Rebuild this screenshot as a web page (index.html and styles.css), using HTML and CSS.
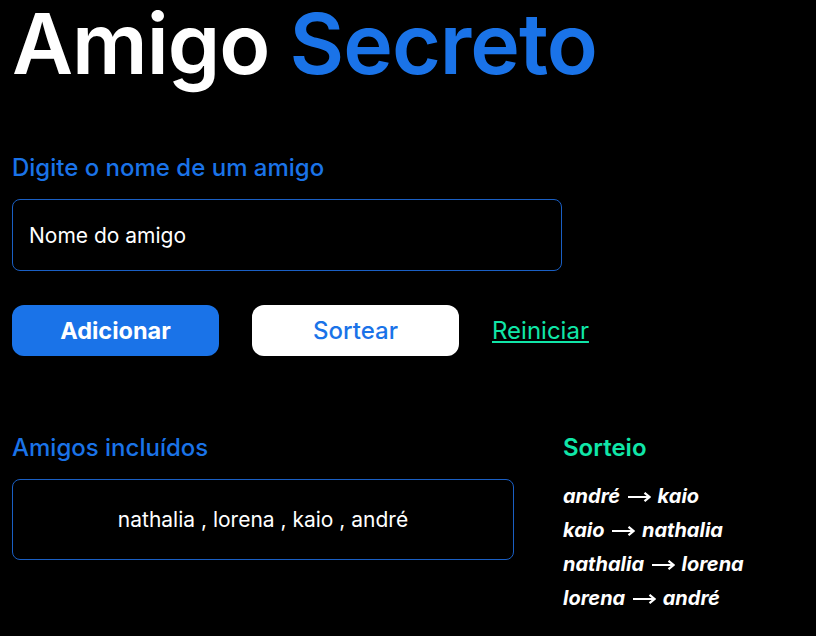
FILE: index.html
```html
<!DOCTYPE html>
<html lang="pt-BR">
<head>
    <meta charset="UTF-8">
    <meta name="viewport" content="width=device-width, initial-scale=1.0">
    <title>Amigo Secreto</title>
    <link rel="stylesheet" href="styles.css">
</head>
<body>
    <main class="app">
        <h1 class="title">Amigo <span class="title-accent">Secreto</span></h1>

        <section class="input-section">
            <label class="section-label" for="amigo">Digite o nome de um amigo</label>
            <input type="text" id="amigo" class="input-name" placeholder="Nome do amigo">
            <div class="button-row">
                <button type="button" class="button button-add">Adicionar</button>
                <button type="button" class="button button-draw">Sortear</button>
                <a href="#" class="link-reset">Reiniciar</a>
            </div>
        </section>

        <section class="results">
            <div class="friends-column">
                <h2 class="section-label">Amigos incluídos</h2>
                <div class="friends-box">nathalia , lorena , kaio , andré</div>
            </div>
            <div class="draw-column">
                <h2 class="section-label draw-title">Sorteio</h2>
                <ul class="draw-list">
                    <li>andré <svg class="arrow" viewBox="0 0 24 10"><path d="M1 5H22M17.5 0.8L22.6 5L17.5 9.2"/></svg> kaio</li>
                    <li>kaio <svg class="arrow" viewBox="0 0 24 10"><path d="M1 5H22M17.5 0.8L22.6 5L17.5 9.2"/></svg> nathalia</li>
                    <li>nathalia <svg class="arrow" viewBox="0 0 24 10"><path d="M1 5H22M17.5 0.8L22.6 5L17.5 9.2"/></svg> lorena</li>
                    <li>lorena <svg class="arrow" viewBox="0 0 24 10"><path d="M1 5H22M17.5 0.8L22.6 5L17.5 9.2"/></svg> andré</li>
                </ul>
            </div>
        </section>
    </main>
</body>
</html>
```

FILE: styles.css
```css
body {
    margin: 0;
    background-color: #000;
    color: #fff;
    font-family: 'Inter', sans-serif;
}
.app {
    padding: 0 12px;
}
.title {
    margin: 0;
    font-size: 84px;
    line-height: 88px;
    font-weight: 600;
    letter-spacing: -1px;
    color: #fff;
}
.title-accent {
    color: #1a73e8;
}
.section-label {
    display: block;
    margin: 0 0 18px;
    font-size: 24px;
    line-height: 26px;
    font-weight: 500;
    color: #1a73e8;
}
.input-section {
    margin-top: 67px;
}
.input-name {
    display: block;
    width: 550px;
    height: 72px;
    box-sizing: border-box;
    padding: 0 16px;
    background-color: #000;
    border: 1px solid #1a5fc4;
    border-radius: 8px;
    font-family: 'Inter', sans-serif;
    font-size: 21px;
    color: #fff;
}
.input-name::placeholder {
    color: #fff;
}
.button-row {
    display: flex;
    align-items: center;
    gap: 33px;
    margin-top: 34px;
}
.button {
    width: 207px;
    height: 51px;
    border: none;
    border-radius: 12px;
    font-family: 'Inter', sans-serif;
    font-size: 24px;
    cursor: pointer;
}
.button-add {
    background-color: #1a73e8;
    color: #fff;
    font-size: 23.5px;
    font-weight: 700;
}
.button-draw {
    background-color: #fff;
    color: #1a73e8;
    font-weight: 500;
}
.link-reset {
    font-size: 24px;
    color: #10e6a8;
}
.results {
    display: flex;
    gap: 49px;
    margin-top: 79px;
}
.friends-column {
    width: 502px;
}
.friends-box {
    display: flex;
    align-items: center;
    justify-content: center;
    height: 81px;
    box-sizing: border-box;
    border: 1px solid #1a5fc4;
    border-radius: 8px;
    font-size: 21px;
}
.draw-title {
    color: #10e6a8;
    font-weight: 600;
}
.draw-list {
    margin: 0;
    padding: 0;
    list-style: none;
}
.draw-list li {
    font-size: 20px;
    line-height: 34px;
    font-style: italic;
    font-weight: 700;
}
.arrow {
    width: 24px;
    height: 10px;
    margin: 0 2px;
    vertical-align: 1px;
    fill: none;
    stroke: #fff;
    stroke-width: 2.2;
}
```
